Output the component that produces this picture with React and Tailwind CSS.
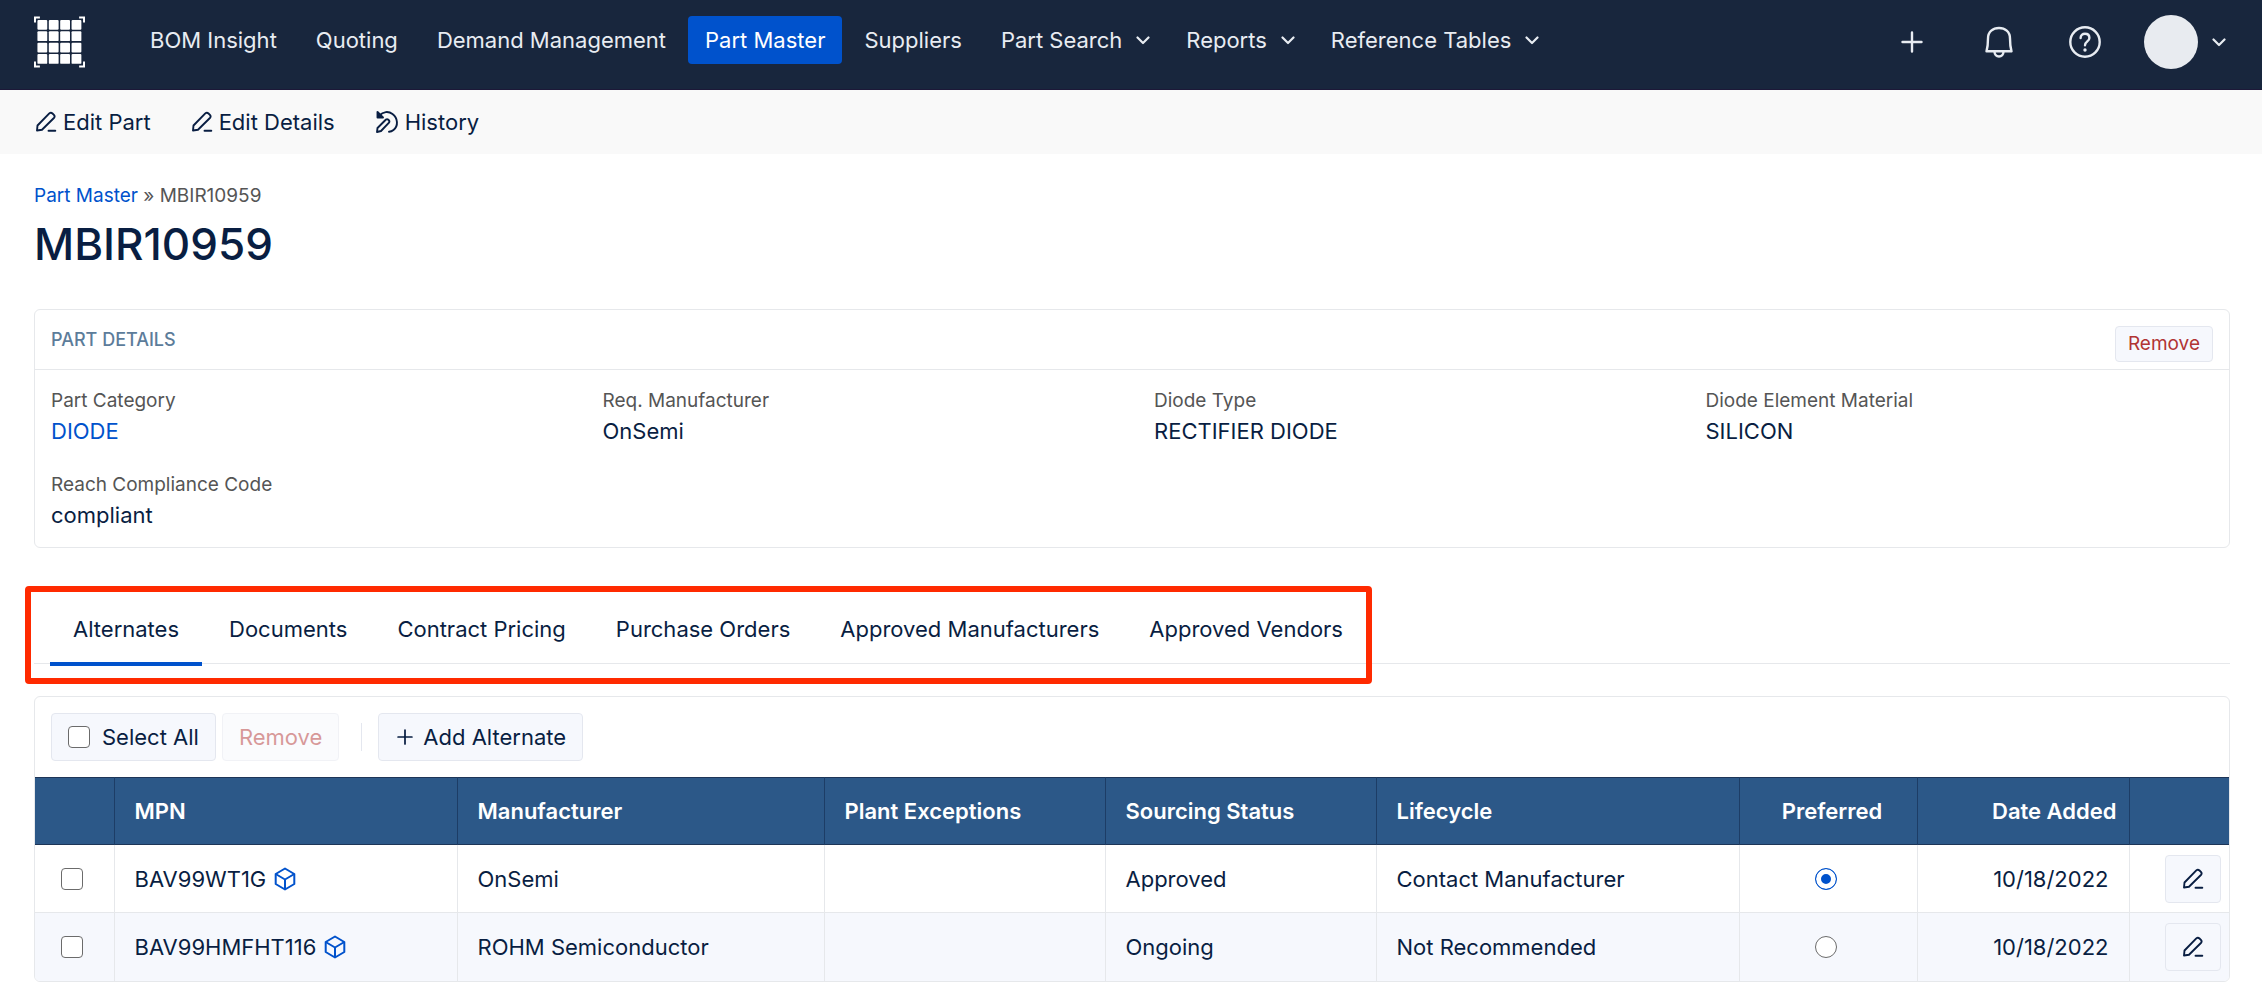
import React, { useState } from "react";

const navItems = [
  { label: "BOM Insight" },
  { label: "Quoting" },
  { label: "Demand Management" },
  { label: "Part Master", active: true },
  { label: "Suppliers" },
  { label: "Part Search", menu: true },
  { label: "Reports", menu: true },
  { label: "Reference Tables", menu: true },
];

const details = [
  { label: "Part Category", value: "DIODE", link: true },
  { label: "Req. Manufacturer", value: "OnSemi" },
  { label: "Diode Type", value: "RECTIFIER DIODE" },
  { label: "Diode Element Material", value: "SILICON" },
  { label: "Reach Compliance Code", value: "compliant" },
];

const tabs = [
  "Alternates",
  "Documents",
  "Contract Pricing",
  "Purchase Orders",
  "Approved Manufacturers",
  "Approved Vendors",
];

const alternates = [
  {
    mpn: "BAV99WT1G",
    manufacturer: "OnSemi",
    status: "Approved",
    lifecycle: "Contact Manufacturer",
    added: "10/18/2022",
  },
  {
    mpn: "BAV99HMFHT116",
    manufacturer: "ROHM Semiconductor",
    status: "Ongoing",
    lifecycle: "Not Recommended",
    added: "10/18/2022",
  },
];

const Logo = () => (
  <svg viewBox="0 0 52 52" className="w-[51px] h-[52px]" fill="#fff">
    {[0, 1, 2, 3].map((row) =>
      [0, 1, 2, 3].map((col) => (
        <rect key={`${row}-${col}`} x={3.5 + col * 11.6} y={3.5 + row * 11.6} width="10" height="10" rx="1" />
      ))
    )}
    <path
      d="M1 6V1H6M46 1H51V6M51 46V51H46M6 51H1V46"
      fill="none"
      stroke="#fff"
      strokeWidth="2"
    />
  </svg>
);

const ChevronIcon = ({ className }) => (
  <svg viewBox="0 0 14 14" className={className} fill="none" stroke="currentColor" strokeWidth="2.2" strokeLinecap="round" strokeLinejoin="round">
    <path d="M1.5 4.5L7 10L12.5 4.5" />
  </svg>
);

const PencilIcon = () => (
  <svg viewBox="0 0 22 22" className="w-[22px] h-[22px]" fill="none" stroke="currentColor" strokeWidth="1.9" strokeLinejoin="round" strokeLinecap="round">
    <path d="M2 19.5L2.5 14.5L14.3 2.4Q15.9 1 17.5 2.5L18.9 3.9Q20.3 5.5 18.9 7L7 18.7Z" />
    <path d="M13.5 19.7H20.3" />
  </svg>
);

const HistoryIcon = () => (
  <svg viewBox="0 0 24 24" className="w-6 h-6" fill="none" stroke="currentColor" strokeWidth="1.9" strokeLinejoin="round" strokeLinecap="round">
    <path d="M2.5 2V7.5H8Z" fill="currentColor" />
    <path d="M4.5 5.5C8 1.5 13.5 1 17.5 4C23 8 23.5 16 18.5 20C17 21.2 15.5 21.7 14 21.8" />
    <path d="M2 22L2.5 18L11 9.5Q12.2 8.7 13.4 9.8Q15 11.2 14 12.7L6 21Z" />
  </svg>
);

const CubeIcon = () => (
  <svg viewBox="0 0 22 24" className="w-[22px] h-6" fill="none" stroke="currentColor" strokeWidth="2" strokeLinejoin="round">
    <path d="M11 1.5L20.3 7V17L11 22.5L1.7 17V7Z" />
    <path d="M1.7 7L11 12.5L20.3 7M11 12.5V22.5" />
  </svg>
);

const PlusIcon = ({ className }) => (
  <svg viewBox="0 0 22 22" className={className} fill="none" stroke="currentColor" strokeWidth="2.4" strokeLinecap="round">
    <path d="M11 1.5V20.5M1.5 11H20.5" />
  </svg>
);

const BellIcon = () => (
  <svg viewBox="0 0 32 32" className="w-8 h-8" fill="none" stroke="currentColor" strokeWidth="2.4" strokeLinejoin="round">
    <path d="M3.5 25.3Q5 20 5 12.5C5 5.5 10 2 16 2S27 5.5 27 12.5Q27 20 28.5 25.3Z" />
    <path d="M11.5 25.5C11.5 28.5 13.5 30.5 16 30.5S20.5 28.5 20.5 25.5" />
  </svg>
);

const HelpIcon = () => (
  <svg viewBox="0 0 32 32" className="w-8 h-8" fill="none" stroke="currentColor" strokeWidth="2.4" strokeLinecap="round">
    <circle cx="16" cy="16" r="14.7" />
    <path d="M11.6 12C11.6 9.3 13.5 7.8 16 7.8S20.4 9.4 20.4 12C20.4 15.4 16 15.5 16 19.3" />
    <circle cx="16" cy="24" r="1.7" fill="currentColor" stroke="none" />
  </svg>
);

const checkboxStyle =
  "appearance-none w-[22px] h-[22px] shrink-0 rounded-sm border border-[#6b6b6b] bg-white checked:bg-[#0052cc]";
const buttonStyle = "border border-[#e4e7ef] bg-[#f6f8fd] rounded-sm";

const App = () => {
  const [activeTab, setActiveTab] = useState("Alternates");
  const [preferred, setPreferred] = useState("BAV99WT1G");

  return (
    <div className="min-h-screen bg-white font-['Inter',sans-serif] text-[22px] leading-8 text-[#091e42]">
      <header className="h-[90px] bg-[#18263d] border-b border-[#1c1838] flex items-start justify-between pl-[34px] pr-9 text-[#e8ecf2]">
        <div className="flex items-start">
          <a href="#home" aria-label="Home" className="pt-4">
            <Logo />
          </a>
          <nav className="flex gap-[5px] pt-4 pl-12">
            {navItems.map((item) =>
              item.menu ? (
                <button key={item.label} type="button" className="h-12 pl-[17px] pr-3.5 flex items-center gap-3.5 whitespace-nowrap">
                  {item.label}
                  <ChevronIcon className="w-3.5 h-3.5" />
                </button>
              ) : (
                <a
                  key={item.label}
                  href="#nav"
                  className={`h-12 px-[17px] flex items-center rounded-sm whitespace-nowrap ${item.active ? "bg-[#0052cc] text-white" : ""}`}
                >
                  {item.label}
                </a>
              )
            )}
          </nav>
        </div>
        <div className="flex items-center pt-[15px]">
          <button type="button" aria-label="Add" className="mr-[60px]">
            <PlusIcon className="w-[22px] h-[22px]" />
          </button>
          <button type="button" aria-label="Notifications" className="mr-[54px]">
            <BellIcon />
          </button>
          <button type="button" aria-label="Help" className="mr-[43px]">
            <HelpIcon />
          </button>
          <button type="button" aria-label="Account" className="flex items-center gap-3.5">
            <span className="w-[54px] h-[54px] rounded-full bg-[#e8ebf0]" />
            <ChevronIcon className="w-3.5 h-3.5" />
          </button>
        </div>
      </header>

      <div className="h-16 bg-[#f9f9f9] flex items-center gap-10 px-[35px]">
        <a href="#edit-part" className="flex items-center gap-1.5">
          <PencilIcon />
          Edit Part
        </a>
        <a href="#edit-details" className="flex items-center gap-1.5">
          <PencilIcon />
          Edit Details
        </a>
        <a href="#history" className="flex items-center gap-1.5">
          <HistoryIcon />
          History
        </a>
      </div>

      <main className="pl-[34px] pr-8 pt-[26px] pb-5">
        <div className="text-[19px] text-[#555]">
          <a href="#part-master" className="text-[#0052cc]">Part Master</a> » MBIR10959
        </div>
        <h1 className="text-[44px] leading-[56px] font-medium mt-1">MBIR10959</h1>

        <section className="mt-[37px] border border-[#e6e8eb] rounded-md">
          <div className="h-[60px] border-b border-[#e6e8eb] flex items-start justify-between px-4">
            <h2 className="text-[18px] font-medium text-[#5c7c9a] pt-3.5">PART DETAILS</h2>
            <button type="button" className={`${buttonStyle} h-9 mt-4 px-3 text-[19px] leading-8 text-[#b13434]`}>
              Remove
            </button>
          </div>
          <dl className="grid grid-cols-4 gap-x-11 gap-y-6 px-4 pt-4 pb-[17px]">
            {details.map((item) => (
              <div key={item.label}>
                <dt className="text-[19px] leading-[30px] text-[#555]">{item.label}</dt>
                <dd className="leading-[30px]">
                  {item.link ? <a href="#category" className="text-[#0052cc]">{item.value}</a> : item.value}
                </dd>
              </div>
            ))}
          </dl>
        </section>

        <div className="relative mt-[58px] h-[58px] border-b border-[#e6e8eb] flex pl-4 gap-1">
          {tabs.map((tab) => (
            <button
              key={tab}
              type="button"
              onClick={() => setActiveTab(tab)}
              className={`h-[60px] px-[23px] pb-2.5 whitespace-nowrap border-b-4 ${activeTab === tab ? "border-[#0052cc]" : "border-transparent"}`}
            >
              {tab}
            </button>
          ))}
          <div className="absolute -left-[9px] -top-5 w-[1347px] h-[98px] border-[6px] border-[#ff2a00] rounded-sm pointer-events-none" />
        </div>

        <section className="mt-8 border border-[#e6e8eb] rounded-md overflow-hidden">
          <div className="flex items-center p-4">
            <label className={`${buttonStyle} h-12 pl-4 pr-4 flex items-center gap-3`}>
              <input type="checkbox" className={checkboxStyle} />
              Select All
            </label>
            <button type="button" disabled className={`${buttonStyle} h-12 ml-1.5 px-4 text-[#b13434] opacity-50`}>
              Remove
            </button>
            <span className="w-px h-7 bg-[#e4e7ef] ml-[22px] mr-4" />
            <button type="button" className={`${buttonStyle} h-12 pl-[18px] pr-4 flex items-center gap-2.5`}>
              <PlusIcon className="w-4 h-4" />
              Add Alternate
            </button>
          </div>

          <table className="w-full table-fixed border-collapse">
            <colgroup>
              <col className="w-[79px]" />
              <col className="w-[343px]" />
              <col className="w-[367px]" />
              <col className="w-[281px]" />
              <col className="w-[271px]" />
              <col className="w-[363px]" />
              <col className="w-[178px]" />
              <col className="w-[212px]" />
              <col className="w-[100px]" />
            </colgroup>
            <thead className="bg-[#2c5888] text-white">
              <tr className="h-[67px] border-y border-[#1d3557] divide-x divide-[#1d3d66] text-left">
                <th aria-label="Select" />
                <th className="px-5 font-semibold">MPN</th>
                <th className="px-5 font-semibold">Manufacturer</th>
                <th className="px-5 font-semibold">Plant Exceptions</th>
                <th className="px-5 font-semibold">Sourcing Status</th>
                <th className="px-5 font-semibold">Lifecycle</th>
                <th className="pl-5 pr-3 font-semibold text-center">Preferred</th>
                <th className="pl-5 pr-3 font-semibold text-right">Date Added</th>
                <th aria-label="Actions" />
              </tr>
            </thead>
            <tbody>
              {alternates.map((row) => (
                <tr key={row.mpn} className="h-[68px] divide-x divide-[#e6e8eb] border-b border-[#e6e8eb] last:border-b-0 even:bg-[#f6f8fd]">
                  <td className="pl-[26px]">
                    <input type="checkbox" aria-label={row.mpn} className={`${checkboxStyle} block`} />
                  </td>
                  <td className="px-5">
                    <div className="flex items-center gap-2">
                      {row.mpn}
                      <a href="#model" aria-label="3D model" className="text-[#0052cc]">
                        <CubeIcon />
                      </a>
                    </div>
                  </td>
                  <td className="px-5">{row.manufacturer}</td>
                  <td className="px-5" />
                  <td className="px-5">{row.status}</td>
                  <td className="px-5">{row.lifecycle}</td>
                  <td className="pr-1">
                    <input
                      type="radio"
                      name="preferred"
                      aria-label={row.mpn}
                      checked={preferred === row.mpn}
                      onChange={() => setPreferred(row.mpn)}
                      className="appearance-none block mx-auto w-[22px] h-[22px] rounded-full border border-[#6b6b6b] bg-white checked:border-[#0052cc] checked:bg-[#0052cc] checked:shadow-[inset_0_0_0_5px_#fff]"
                    />
                  </td>
                  <td className="px-5 text-right">{row.added}</td>
                  <td>
                    <button type="button" aria-label="Edit" className={`${buttonStyle} w-14 h-12 ml-auto mr-2 flex items-center justify-center`}>
                      <PencilIcon />
                    </button>
                  </td>
                </tr>
              ))}
            </tbody>
          </table>
        </section>
      </main>
    </div>
  );
};

export default App;
